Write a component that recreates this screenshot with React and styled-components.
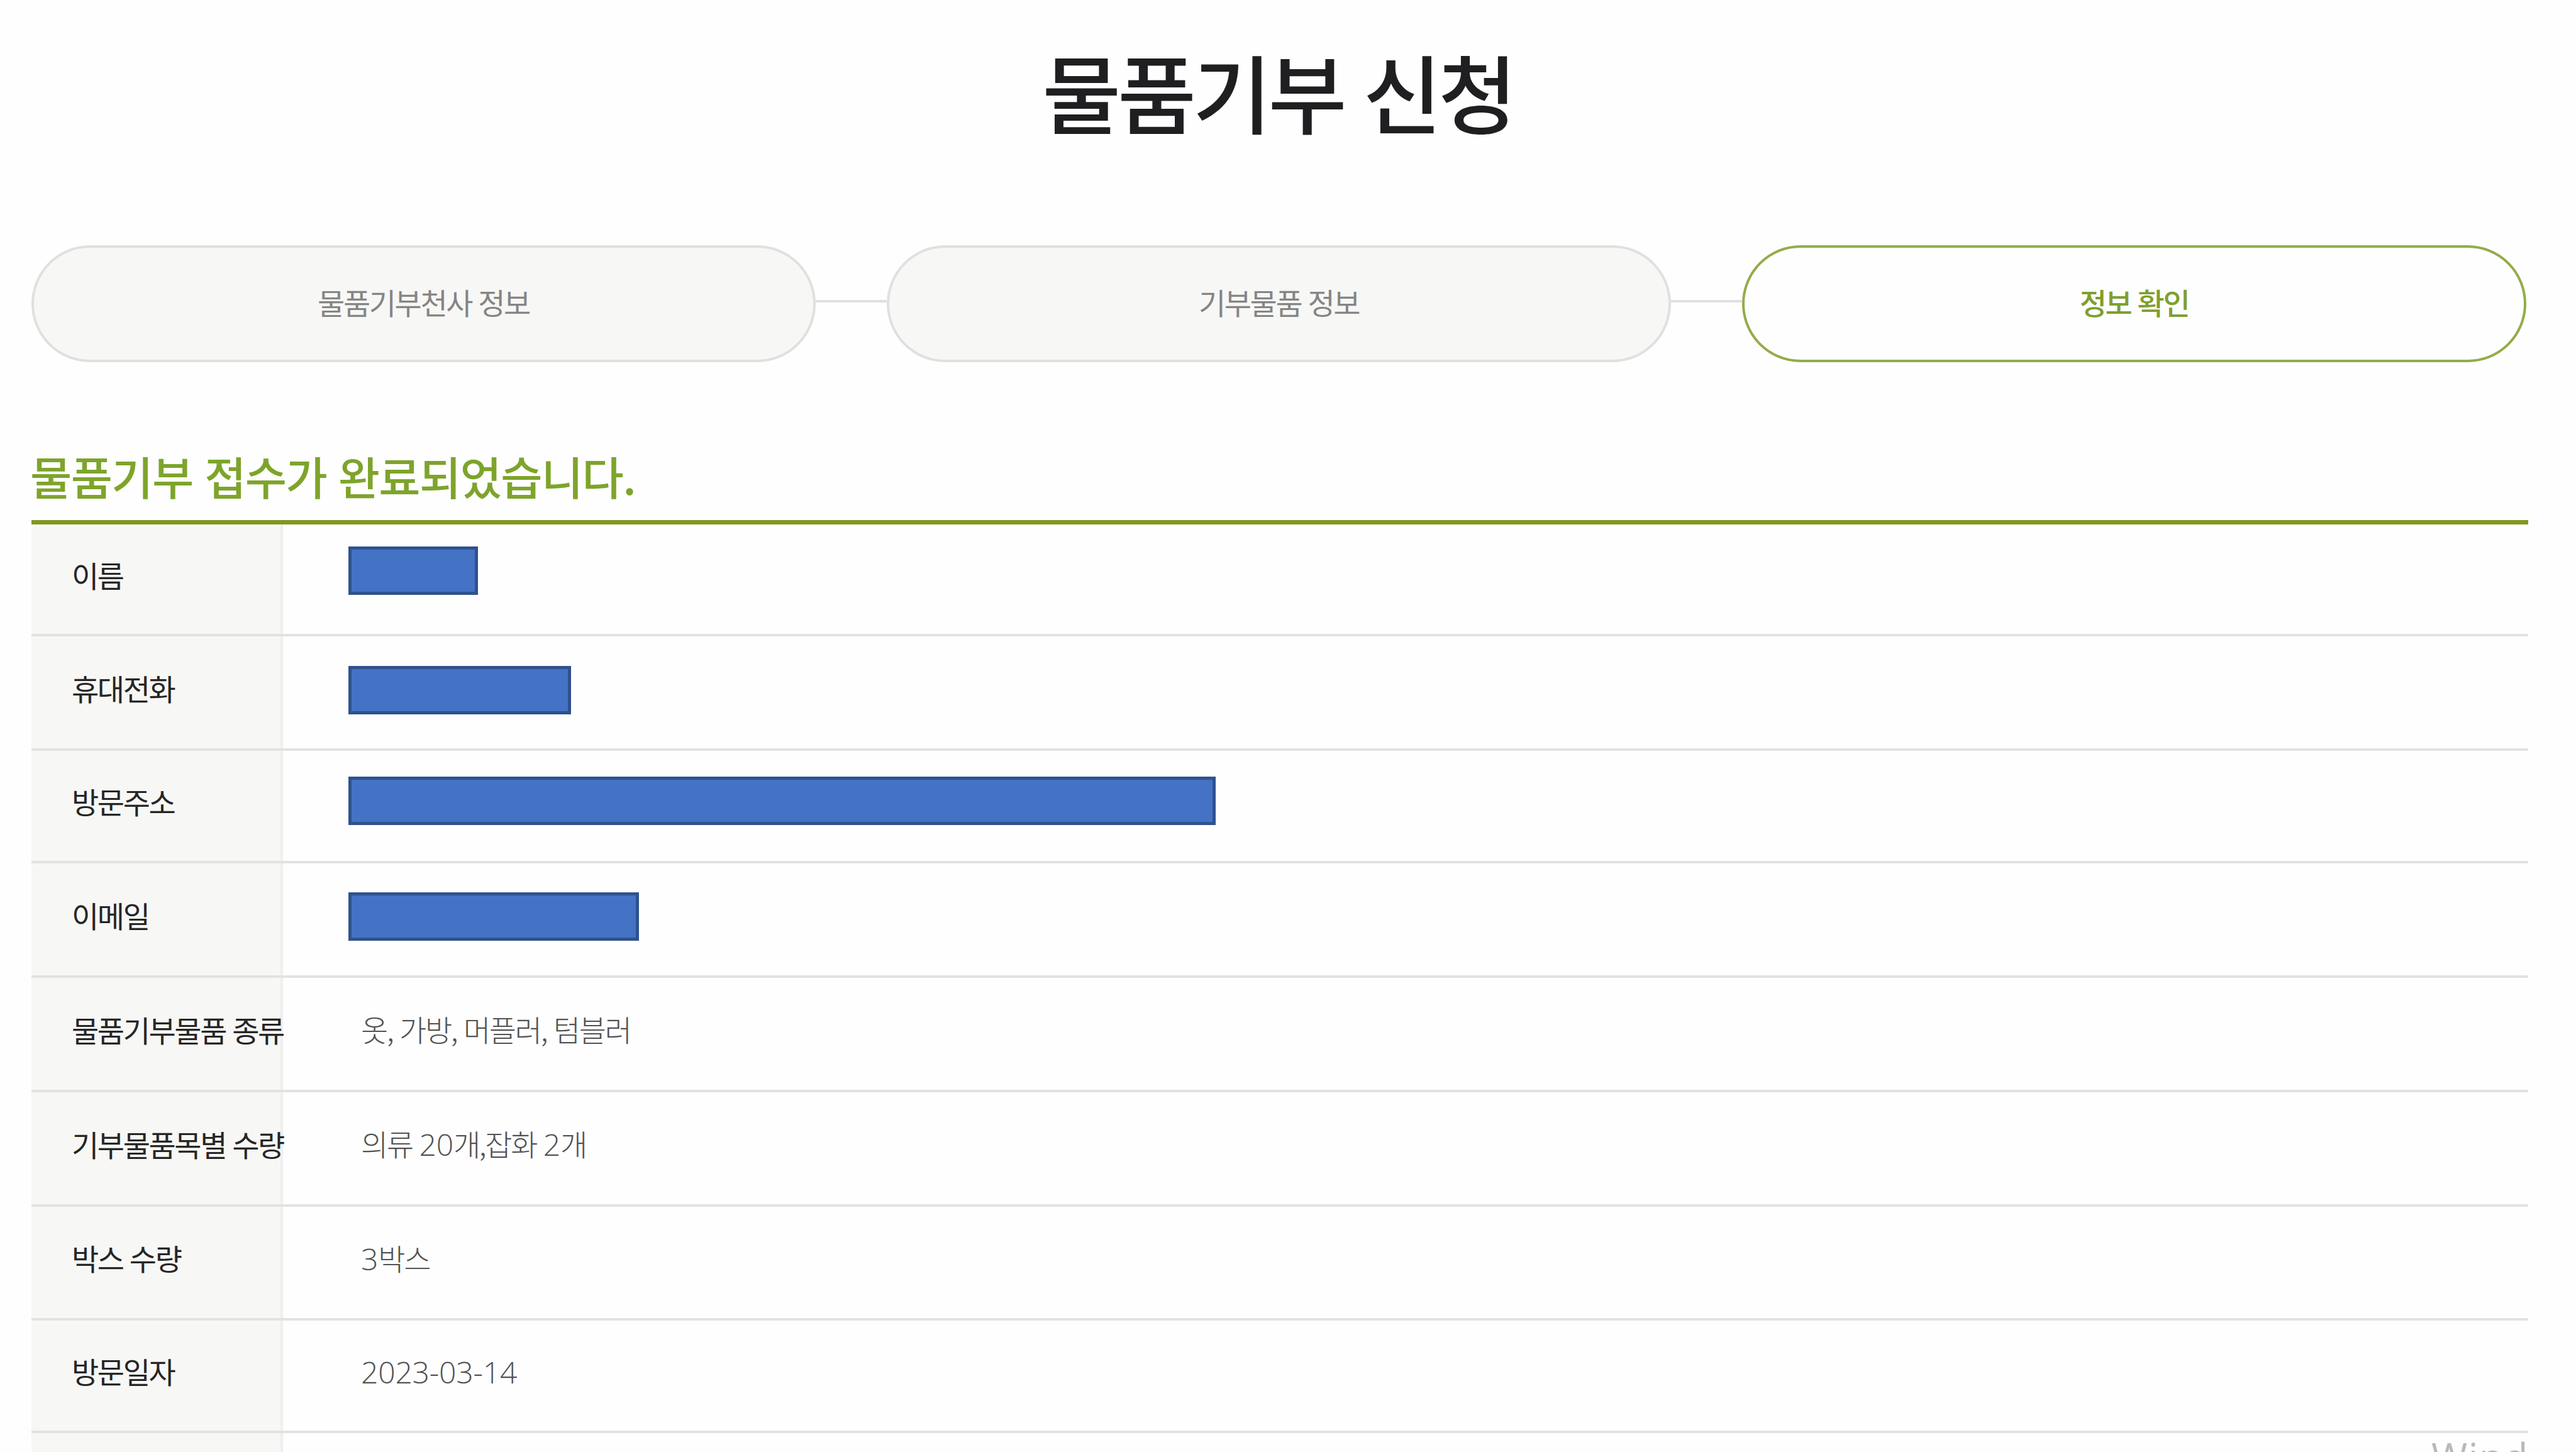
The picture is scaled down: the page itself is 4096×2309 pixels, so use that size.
import React from "react";
import styled, { createGlobalStyle } from "styled-components";

const STEPS = ["물품기부천사 정보", "기부물품 정보", "정보 확인"];

const ROWS = [
  { label: "이름", height: 178, mask: { width: 206, top: 35 } },
  { label: "휴대전화", height: 182, mask: { width: 354, top: 47 } },
  { label: "방문주소", height: 179, mask: { width: 1379, top: 41 } },
  { label: "이메일", height: 182, mask: { width: 462, top: 46 } },
  { label: "물품기부물품 종류", height: 182, value: "옷, 가방, 머플러, 텀블러" },
  { label: "기부물품목별 수량", height: 182, value: "의류 20개,잡화 2개" },
  { label: "박스 수량", height: 181, value: "3박스" },
  { label: "방문일자", height: 179, value: "2023-03-14" },
  { label: "", height: 180, value: "" },
];

// digits are set wider than the hangul around them
function renderValue(value) {
  return value
    .split(/([\d-]+)/)
    .map((part, index) =>
      index % 2 ? <Digits key={index}>{part}</Digits> : part
    );
}

function App() {
  return (
    <Container>
      <GlobalStyle />
      <PageTitle>물품기부 신청</PageTitle>

      <StepList>
        {STEPS.map((step, index) => (
          <React.Fragment key={step}>
            {index > 0 && <StepLine />}
            <Step $active={index === STEPS.length - 1}>{step}</Step>
          </React.Fragment>
        ))}
      </StepList>

      <SectionTitle>물품기부 접수가 완료되었습니다.</SectionTitle>

      <Table>
        {ROWS.map((row) => (
          <Row key={row.label} $height={row.height}>
            <Label>{row.label}</Label>
            {row.mask ? (
              <MaskCell>
                <Mask $width={row.mask.width} $top={row.mask.top} />
              </MaskCell>
            ) : (
              <Value>
                <p>{renderValue(row.value)}</p>
              </Value>
            )}
          </Row>
        ))}
      </Table>

      <Watermark>Wind</Watermark>
    </Container>
  );
}

export default App;

const GlobalStyle = createGlobalStyle`
  * {
    box-sizing: border-box;
  }

  body {
    margin: 0;
    background: #fefefe;
    font-family: "Noto Sans CJK KR", "Noto Sans", sans-serif;
  }

  p {
    margin: 0;
  }
`;

const Container = styled.div`
  position: relative;

  width: 4096px;
  height: 2309px;
  padding: 0 76px 0 50px;
  overflow: hidden;
`;

const PageTitle = styled.h1`
  height: 390px;
  margin: 0;
  padding: 44px 0 0 0;

  font-size: 136px;
  font-weight: 500;
  line-height: 200px;
  letter-spacing: -5.4px;
  word-spacing: 6px;
  text-align: center;
  text-indent: -6px;
  color: #1f1f22;
`;

const StepList = styled.div`
  display: flex;
  align-items: center;

  width: 3967px;
  height: 186px;
`;

const Step = styled.div`
  display: flex;
  flex: 1;
  align-items: center;
  justify-content: center;

  height: 186px;
  padding-bottom: 8px;
  border: 4px solid ${({ $active }) => ($active ? "#93ac48" : "#e0e0df")};
  border-radius: 93px;
  background: ${({ $active }) => ($active ? "#fefefe" : "#f7f7f5")};

  font-size: 47px;
  font-weight: ${({ $active }) => ($active ? 500 : 400)};
  letter-spacing: -2.4px;
  word-spacing: 2px;
  color: ${({ $active }) => ($active ? "#7f9f2e" : "#858585")};
`;

const StepLine = styled.div`
  width: 113px;
  height: 4px;
  margin-bottom: 9px;
  background: #e0e0e0;
`;

const SectionTitle = styled.h2`
  height: 251px;
  margin: 0 0 0 -2px;
  padding-top: 125px;

  font-size: 72px;
  font-weight: 500;
  line-height: 110px;
  letter-spacing: -1.6px;
  word-spacing: 4px;
  color: #7ea42b;
`;

const Table = styled.div`
  display: flex;
  flex-direction: column;

  border-top: 7px solid #80981e;
`;

const Row = styled.div`
  display: flex;
  flex-shrink: 0;

  height: ${({ $height }) => $height}px;
  border-bottom: 4px solid #e2e2e1;
`;

const Label = styled.div`
  display: flex;
  align-items: center;

  width: 400px;
  padding: 0 0 16px 64px;
  border-right: 4px solid #efeff0;
  background: #f7f7f5;

  font-size: 47px;
  font-weight: 400;
  letter-spacing: -2.4px;
  word-spacing: 2px;
  white-space: nowrap;
  color: #262626;
`;

const Value = styled.div`
  display: flex;
  align-items: center;

  padding: 0 0 16px 124px;

  font-size: 47px;
  font-weight: 300;
  line-height: 70px;
  letter-spacing: -2.3px;
  word-spacing: 2.5px;
  color: #525252;
`;

const Digits = styled.span`
  font-family: "Open Sans", sans-serif;
  font-size: 48px;
  line-height: 1;
  letter-spacing: -0.2px;
`;

const MaskCell = styled.div`
  display: flex;
  align-items: flex-start;

  padding-left: 104px;
`;

/* covers the applicant's personal information */
const Mask = styled.div`
  width: ${({ $width }) => $width}px;
  height: 77px;
  margin-top: ${({ $top }) => $top}px;
  border: 5px solid #2f528f;
  background: #4472c4;
`;

const Watermark = styled.div`
  position: absolute;
  top: 2276px;
  left: 3866px;

  font-family: "Open Sans", sans-serif;
  font-size: 62px;
  line-height: 80px;
  letter-spacing: 1.5px;
  color: #b9b9b9;
`;
